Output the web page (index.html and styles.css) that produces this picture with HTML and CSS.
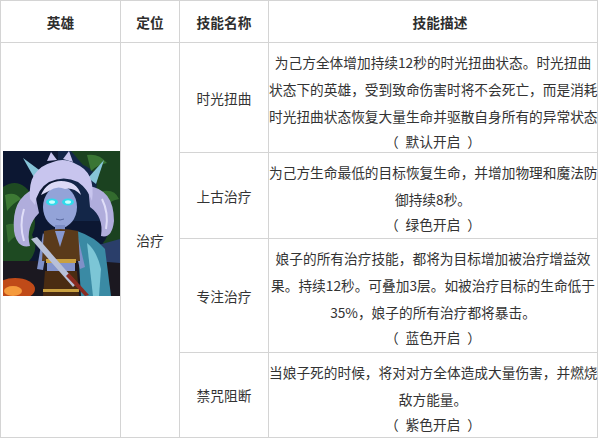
FILE: index.html
```html
<!DOCTYPE html>
<html lang="zh-CN">
<head>
<meta charset="utf-8">
<title>英雄技能</title>
<link rel="stylesheet" href="styles.css">
</head>
<body>
<table class="skills">
  <colgroup>
    <col class="c-hero">
    <col class="c-role">
    <col class="c-name">
    <col class="c-desc">
  </colgroup>
  <thead>
    <tr class="head">
      <th>英雄</th>
      <th>定位</th>
      <th>技能名称</th>
      <th class="h-desc">技能描述</th>
    </tr>
  </thead>
  <tbody>
    <tr class="r1">
      <td class="hero" rowspan="4">
        <svg class="portrait" viewBox="0 0 117 145" width="117" height="145">
          <rect width="117" height="145" fill="#0c1732"/>
          <rect x="55" y="0" width="62" height="70" fill="#132648"/>
          <path d="M0 36 Q12 28 22 36 Q32 44 27 58 Q36 70 29 84 Q37 98 26 110 L0 114 Z" fill="#1e4a22"/>
          <path d="M2 44 Q12 40 18 48 Q10 52 4 60 Z" fill="#3d7a34"/>
          <path d="M3 74 Q14 70 22 80 Q12 84 5 92 Z" fill="#356d30"/>
          <path d="M68 0 H117 V96 Q106 102 100 92 Q111 78 99 66 Q106 50 93 40 Q97 20 80 14 Z" fill="#1b4220"/>
          <path d="M84 4 Q96 2 104 12 Q94 14 88 20 Z" fill="#3a7634"/>
          <path d="M100 40 Q112 38 116 48 Q106 50 102 56 Z" fill="#336b2e"/>
          <rect x="0" y="110" width="117" height="35" fill="#1b1820"/>
          <path d="M88 96 L117 88 V112 L92 110 Z" fill="#2a3e6a"/>
          <ellipse cx="12" cy="138" rx="20" ry="11" fill="#c04a18"/>
          <ellipse cx="10" cy="140" rx="9" ry="5" fill="#f59a3c"/>
          <path d="M74 80 Q92 86 102 98 L108 145 H78 Z" fill="#3a8aa4"/>
          <path d="M84 92 Q94 100 98 118 L96 145 H90 Z" fill="#7cc6d6"/>
          <path d="M31 38 Q8 48 11 80 Q14 98 27 95 Q22 76 36 62 Z" fill="#b0addc"/>
          <path d="M21 58 Q16 74 21 90" stroke="#e0def8" stroke-width="2" fill="none"/>
          <path d="M85 35 Q111 38 111 70 Q109 88 98 85 Q101 66 87 56 Z" fill="#b0addc"/>
          <path d="M99 48 Q106 62 103 78" stroke="#e0def8" stroke-width="2" fill="none"/>
          <path d="M33 30 L20 7 L43 24 Z" fill="#86c4d8"/>
          <path d="M85 27 L101 9 L93 33 Z" fill="#86c4d8"/>
          <path d="M27 48 Q24 18 50 11 Q61 6 73 13 Q93 21 89 50 Q85 38 75 31 Q61 24 46 31 Q34 38 32 54 Z" fill="#c8c5ee"/>
          <path d="M44 10 L48 1 L54 9 Z M60 8 L66 0 L70 11 Z" fill="#c8c5ee"/>
          <ellipse cx="57" cy="56" rx="17" ry="21" fill="#93a3d8"/>
          <path d="M38 44 Q44 30 58 30 Q74 30 78 44 Q70 36 62 38 Q54 34 46 40 Z" fill="#dcdaf6"/>
          <ellipse cx="49" cy="51" rx="6" ry="3.5" fill="#2fdcec"/>
          <ellipse cx="65" cy="51" rx="6" ry="3.5" fill="#2fdcec"/>
          <ellipse cx="49" cy="51" rx="3" ry="1.8" fill="#c8ffff"/>
          <ellipse cx="65" cy="51" rx="3" ry="1.8" fill="#c8ffff"/>
          <path d="M53 68 Q57 70 61 68" stroke="#5a6aa0" stroke-width="1" fill="none"/>
          <rect x="52" y="74" width="10" height="8" fill="#7b8cc4"/>
          <path d="M40 82 L34 118 L40 119 L45 90 Z" fill="#7f90c8"/>
          <path d="M74 82 L82 116 L77 118 L70 90 Z" fill="#7f90c8"/>
          <path d="M41 80 Q57 76 75 80 L77 110 L39 110 Z" fill="#5a3a1a"/>
          <path d="M52 80 L57 96 L62 80 Z" fill="#8798cf"/>
          <rect x="43" y="108" width="30" height="4" fill="#c9a040"/>
          <rect x="44" y="112" width="28" height="8" fill="#8494cc"/>
          <path d="M42 120 H74 L76 145 H40 Z" fill="#4a2c12"/>
          <rect x="40" y="138" width="36" height="3" fill="#c9a040"/>
          <path d="M28 88 L34 86 L74 132 L70 136 Z" fill="#b8c0d8"/>
          <path d="M66 122 L86 144 L82 145 L63 125 Z" fill="#8a2a20"/>
        </svg>
      </td>
      <td class="role" rowspan="4">治疗</td>
      <td class="name">时光扭曲</td>
      <td class="desc">
        <div class="txt">为己方全体增加持续12秒的时光扭曲状态。时光扭曲<br>状态下的英雄，受到致命伤害时将不会死亡，而是消耗<br>时光扭曲状态恢复大量生命并驱散自身所有的异常状态</div>
        <div class="open">（&ensp;默认开启&ensp;）</div>
      </td>
    </tr>
    <tr class="r2">
      <td class="name">上古治疗</td>
      <td class="desc">
        <div class="txt">为己方生命最低的目标恢复生命，并增加物理和魔法防<br>御持续8秒。</div>
        <div class="open">（&ensp;绿色开启&ensp;）</div>
      </td>
    </tr>
    <tr class="r3">
      <td class="name">专注治疗</td>
      <td class="desc">
        <div class="txt">娘子的所有治疗技能，都将为目标增加被治疗增益效<br>果。持续12秒。可叠加3层。如被治疗目标的生命低于<br>35%，娘子的所有治疗都将暴击。</div>
        <div class="open">（&ensp;蓝色开启&ensp;）</div>
      </td>
    </tr>
    <tr class="r4">
      <td class="name">禁咒阻断</td>
      <td class="desc">
        <div class="txt">当娘子死的时候，将对对方全体造成大量伤害，并燃烧<br>敌方能量。</div>
        <div class="open">（&ensp;紫色开启&ensp;）</div>
      </td>
    </tr>
  </tbody>
</table>
</body>
</html>
```

FILE: styles.css
```css
html, body {
  margin: 0;
  padding: 0;
  background: #ffffff;
}

body {
  font-family: "Noto Sans CJK SC", "Noto Sans", sans-serif;
  font-size: 13.7px;
  color: #333333;
}

.skills {
  border-collapse: collapse;
  table-layout: fixed;
  width: 597px;
}

.c-hero { width: 120px; }
.c-role { width: 59px; }
.c-name { width: 89px; }
.c-desc { width: 329px; }

.skills th,
.skills td {
  border: 1px solid #d4d4d4;
  padding: 0;
  text-align: center;
  vertical-align: middle;
}

.skills th {
  font-weight: bold;
  color: #2e2e2e;
}

.skills .h-desc {
  padding-left: 14px;
}

.head { height: 42px; }
.r1 { height: 110px; }
.r2 { height: 86px; }
.r3 { height: 114px; }
.r4 { height: 85px; }

.skills td.hero {
  padding: 0 0 34px 2px;
  text-align: left;
}

.portrait {
  display: block;
}

.skills td.desc {
  vertical-align: top;
  padding: 6px 0 0;
  white-space: nowrap;
}

.txt {
  line-height: 27px;
}

.open {
  line-height: 22px;
}
```
